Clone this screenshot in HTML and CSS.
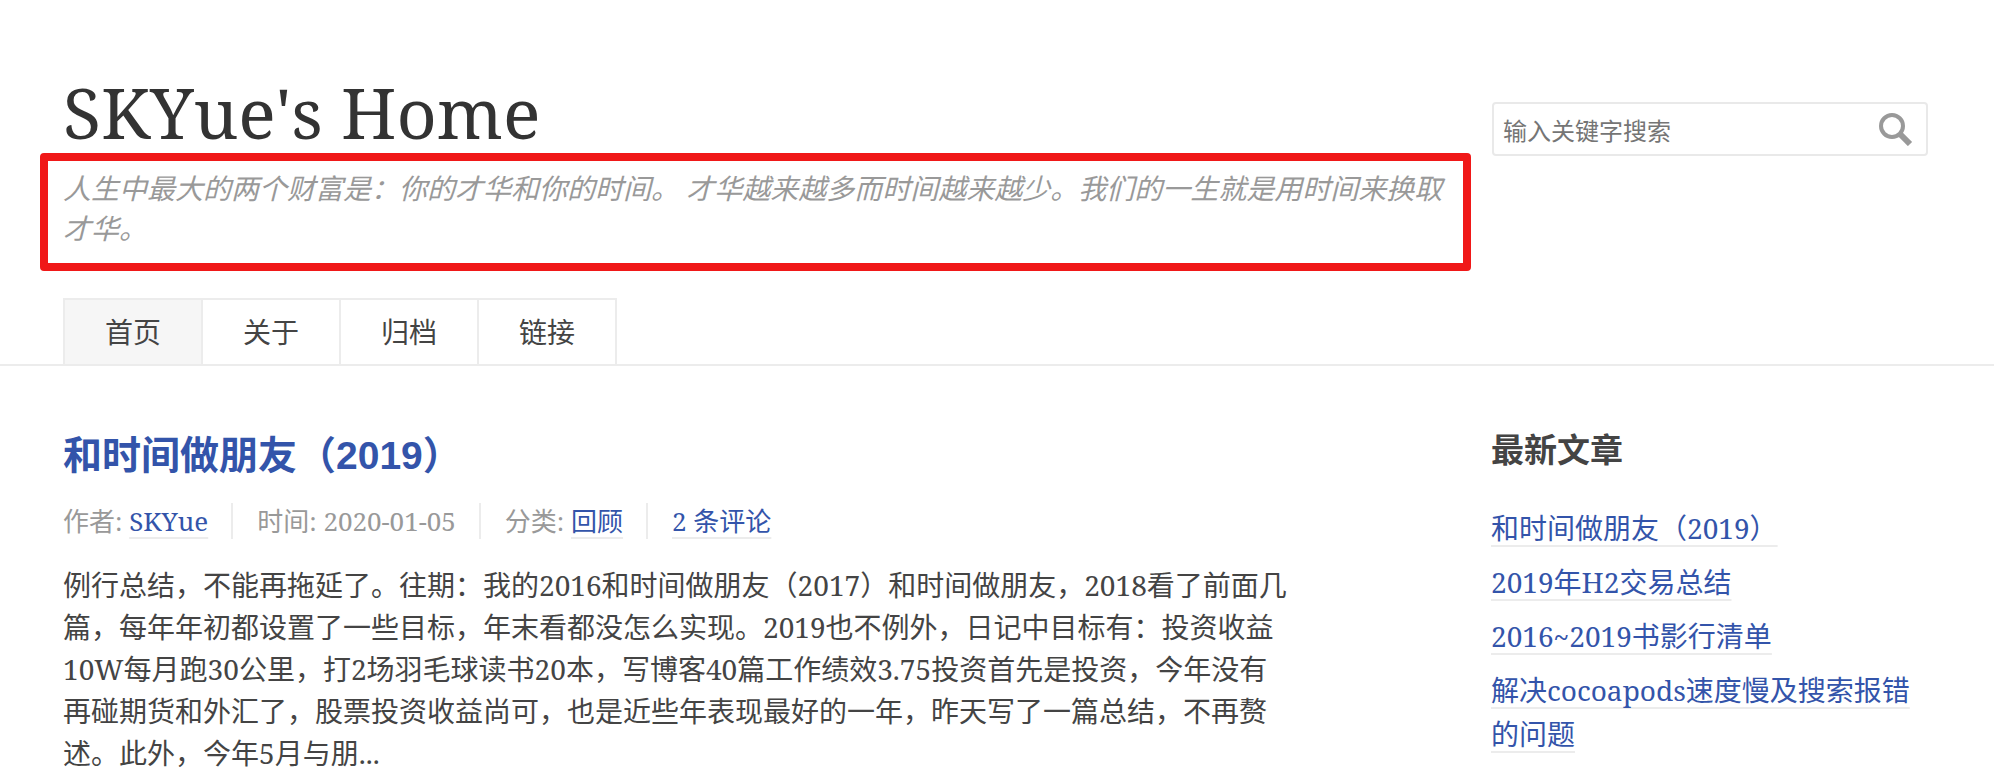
FILE: index.html
```
<!DOCTYPE html>
<html lang="zh-CN">
<head>
    <meta charset="UTF-8">
    <meta name="viewport" content="width=device-width, initial-scale=1.0">
    <title>SKYue's Home</title>
    <link rel="stylesheet" href="styles.css">
</head>
<body>
    <header>
        <div class="container topo">
            <div class="site-name">
                <h1><a href="#">SKYue's Home</a></h1>
                <p class="description">人生中最大的两个财富是：你的才华和你的时间。 才华越来越多而时间越来越少。我们的一生就是用时间来换取才华。</p>
            </div>
            <form class="search" role="search">
                <input type="text" placeholder="输入关键字搜索" aria-label="搜索关键字">
                <button type="submit" aria-label="搜索">
                    <svg width="34" height="34" viewBox="0 0 34 34" fill="none" stroke="#999">
                        <circle cx="13" cy="14" r="11" stroke-width="4"/>
                        <path d="M20 21L31 32" stroke-width="6"/>
                    </svg>
                </button>
            </form>
        </div>
        <nav class="container">
            <a class="current" href="#">首页</a>
            <a href="#">关于</a>
            <a href="#">归档</a>
            <a href="#">链接</a>
        </nav>
    </header>
    <div class="container content">
        <main>
            <article class="post">
                <h2><a href="#">和时间做朋友（2019）</a></h2>
                <ul class="meta">
                    <li>作者: <a href="#">SKYue</a></li>
                    <li>时间: <time datetime="2020-01-05">2020-01-05</time></li>
                    <li>分类: <a href="#">回顾</a></li>
                    <li><a href="#">2 条评论</a></li>
                </ul>
                <p>例行总结，不能再拖延了。往期：我的2016和时间做朋友（2017）和时间做朋友，2018看了前面几篇，每年年初都设置了一些目标，年末看都没怎么实现。2019也不例外，日记中目标有：投资收益10W每月跑30公里，打2场羽毛球读书20本，写博客40篇工作绩效3.75投资首先是投资，今年没有再碰期货和外汇了，股票投资收益尚可，也是近些年表现最好的一年，昨天写了一篇总结，不再赘述。此外，今年5月与朋...</p>
            </article>
        </main>
        <aside>
            <h3>最新文章</h3>
            <ul>
                <li><a href="#">和时间做朋友（2019）</a></li>
                <li><a href="#">2019年H2交易总结</a></li>
                <li><a href="#">2016~2019书影行清单</a></li>
                <li><a href="#">解决cocoapods速度慢及搜索报错的问题</a></li>
            </ul>
        </aside>
    </div>
</body>
</html>
```
FILE: styles.css
```
* {
    padding: 0;
    margin: 0;
    box-sizing: border-box;
}
:root {
    --link: #3354aa;
    --text: #444;
    --muted: #999;
    --line: #ececec;
}
body {
    background-color: #fff;
    color: var(--text);
    font-family: "Droid Serif", "Noto Serif", "DejaVu Serif Condensed", "Noto Sans CJK SC", serif;
    font-size: 28px;
    line-height: 42px;
}
a {
    color: var(--link);
    text-decoration: none;
}
ul {
    list-style: none;
}
.container {
    padding: 0 66px 0 63px;
}

header {
    padding-top: 71px;
    border-bottom: 2px solid var(--line);
}
.topo {
    display: grid;
    grid-template-columns: 1fr 436px;
    column-gap: 21px;
    align-items: start;
}
h1 {
    font-size: 70px;
    font-weight: normal;
    line-height: 82px;
}
h1 a {
    color: #333;
}
.description {
    margin-left: -23px;
    padding: 7px 15px 15px;
    border: 8px solid #f01818;
    border-radius: 4px;
    color: var(--muted);
    font-style: italic;
    line-height: 40px;
}
.search {
    display: flex;
    align-items: center;
    height: 54px;
    margin-top: 31px;
    padding: 0 13px 0 9px;
    border: 2px solid #e9e9e9;
    border-radius: 4px;
}
.search input {
    flex: 1;
    min-width: 0;
    border: none;
    outline: none;
    background: none;
    font-family: "Noto Sans CJK SC", sans-serif;
    font-size: 24px;
}
.search input::placeholder {
    color: #757575;
}
.search button {
    border: none;
    background: none;
    line-height: 0;
}

nav {
    display: flex;
    margin-top: 27px;
}
nav a {
    padding: 0 40px;
    border: 2px solid var(--line);
    border-width: 2px 2px 0 0;
    color: var(--text);
    line-height: 64px;
}
nav a:first-child {
    border-left-width: 2px;
}
nav a.current {
    background-color: #f6f6f6;
}

.content {
    display: grid;
    grid-template-columns: 1fr 437px;
    column-gap: 202px;
    padding-top: 60px;
}
h2 {
    font-family: "Liberation Sans", "Noto Sans CJK SC", sans-serif;
    font-size: 39px;
    line-height: 60px;
}
.meta {
    display: flex;
    margin: 17px 0 25px;
    color: var(--muted);
    font-size: 26px;
    line-height: 36px;
}
.meta li {
    padding-right: 23px;
    margin-right: 24px;
    border-right: 2px solid var(--line);
}
.meta li:last-child {
    border-right: none;
}
.meta a, aside a {
    text-decoration: underline 2px var(--line);
    text-decoration-skip-ink: none;
    text-underline-offset: 6px;
}

aside h3 {
    font-size: 33px;
    line-height: 48px;
    margin-bottom: 32px;
}
aside li {
    line-height: 44px;
    margin-bottom: 10px;
}
```
